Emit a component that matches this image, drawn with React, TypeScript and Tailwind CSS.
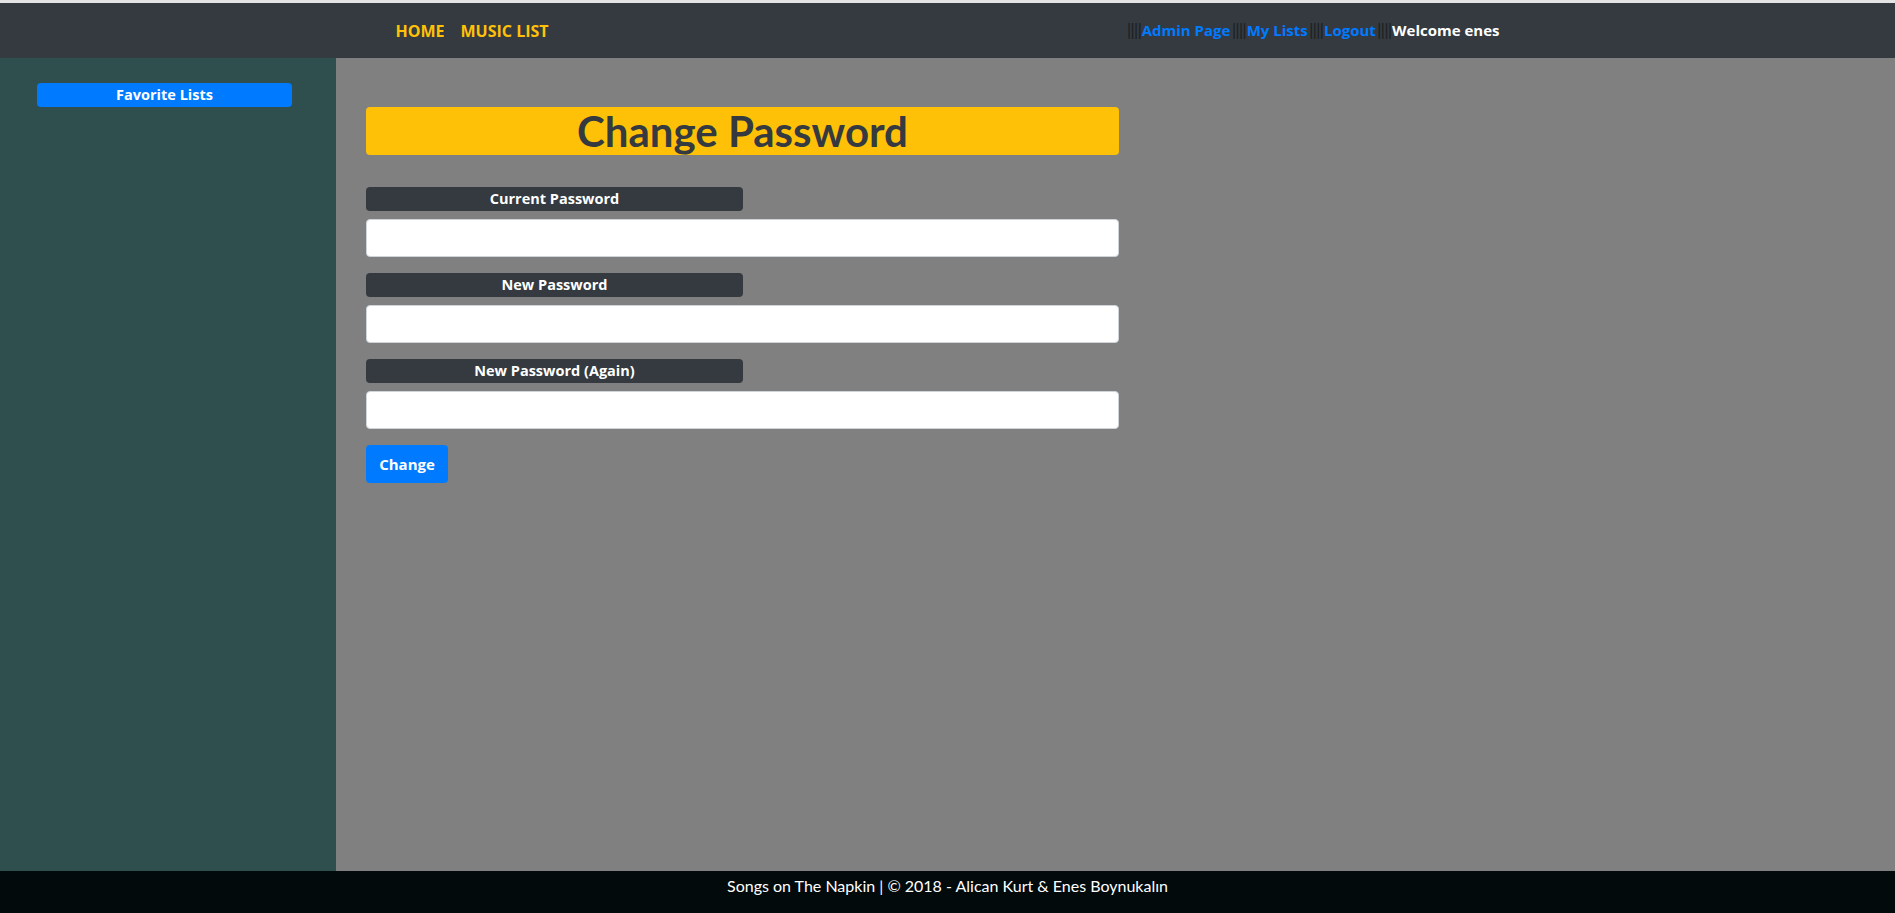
import React from 'react';

function Sep() {
  return (
    <span className="font-['DejaVu_Sans',sans-serif] text-[15px] font-normal leading-none tracking-[-1.5px] text-[#1c1f22]">
      ||||
    </span>
  );
}

function PasswordField({ label }: { label: string }) {
  return (
    <div className="flex flex-col gap-2">
      <div className="flex h-6 w-[377px] items-center justify-center rounded-[4px] bg-[#343a40] text-[14.5px] font-bold text-white">
        {label}
      </div>
      <input
        type="password"
        className="h-[38px] w-full rounded-[4px] border border-[#ced4da] bg-white px-3 outline-none"
      />
    </div>
  );
}

export default function App() {
  return (
    <div className="flex h-[913px] flex-col overflow-hidden font-['Open_Sans','Lato',sans-serif]">
      <div className="h-[3px] bg-[#e4e4e4]" />

      {/* Navbar */}
      <header className="flex h-[55px] shrink-0 items-center bg-[#343a40]">
        <div className="mx-auto flex w-[1140px] items-center justify-between px-[15px]">
          <nav className="flex items-center gap-4 pl-[3px] text-[16px] font-bold text-[#ffc107]">
            <span>HOME</span>
            <span>MUSIC LIST</span>
          </nav>
          <nav className="flex items-center gap-[1px] pr-[3px] text-[15px] font-bold">
            <Sep />
            <span className="text-[#007bff]">Admin Page</span>
            <Sep />
            <span className="text-[#007bff]">My Lists</span>
            <Sep />
            <span className="text-[#007bff]">Logout</span>
            <Sep />
            <span className="text-white">Welcome enes</span>
          </nav>
        </div>
      </header>

      {/* Body */}
      <div className="flex flex-1">
        <aside className="w-[336px] shrink-0 bg-[#2f4f4f] pl-[37px] pt-[25px]">
          <button
            type="button"
            className="flex h-6 w-[255px] items-center justify-center rounded-[4px] bg-[#007bff] text-[14.5px] font-bold text-white"
          >
            Favorite Lists
          </button>
        </aside>

        <main className="flex-1 bg-[#808080] pl-[30px] pt-[49px]">
          <div className="w-[753px]">
            <h1 className="flex h-12 items-center justify-center rounded-[4px] bg-[#ffc107] font-['Lato',sans-serif] text-[42px] font-bold leading-[48px] text-[#343a40]">
              Change Password
            </h1>

            <form className="mt-8 flex flex-col gap-4">
              <PasswordField label="Current Password" />
              <PasswordField label="New Password" />
              <PasswordField label="New Password (Again)" />
              <div>
                <button
                  type="button"
                  className="h-[38px] w-[82px] rounded-[4px] bg-[#007bff] text-[15px] font-bold text-white"
                >
                  Change
                </button>
              </div>
            </form>
          </div>
        </main>
      </div>

      {/* Footer */}
      <footer className="h-[42px] shrink-0 bg-[#020a0c] pt-1 text-center font-['Lato',sans-serif] text-[16px] leading-[22px] text-white">
        Songs on The Napkin | © 2018 - Alican Kurt &amp; Enes Boynukalın
      </footer>
    </div>
  );
}
